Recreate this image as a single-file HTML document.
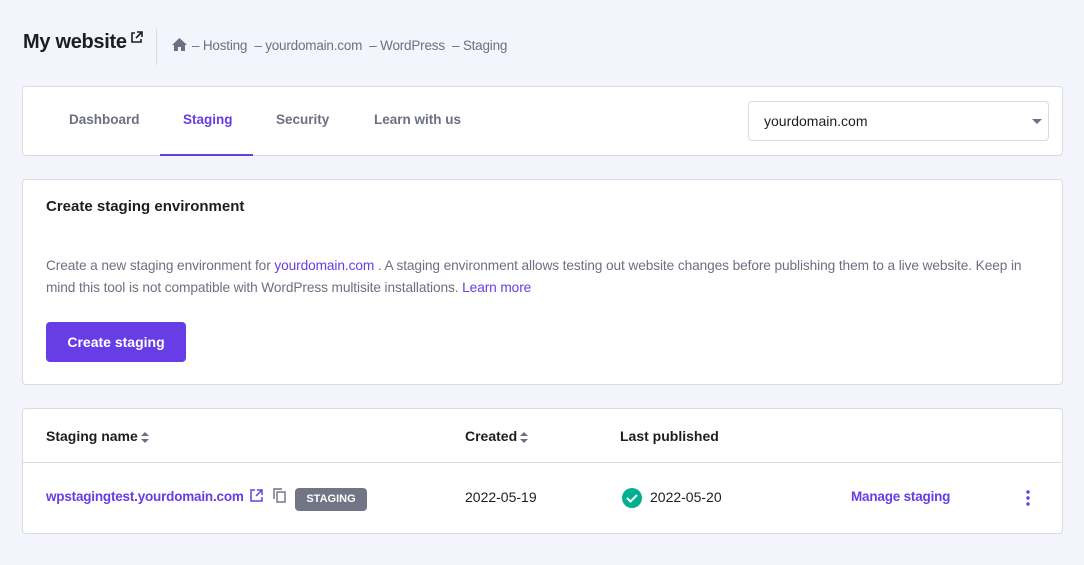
<!DOCTYPE html>
<html><head><style>
*{box-sizing:border-box;margin:0;padding:0}
body{width:1084px;height:565px;background:#f4f4fc;font-family:"Liberation Sans",sans-serif;color:#1d1e20;position:relative;overflow:hidden}
.abs{position:absolute}
.card{position:absolute;background:#fff;border:1px solid #dadce0;border-radius:4px}
.tab{position:absolute;top:25px;font-size:14px;font-weight:bold;color:#6d7081}
.muted{color:#6d7081}
.link{color:#673de6}
.sort{display:inline-block;vertical-align:middle;margin-left:3px}
</style></head><body>
<div class="abs" style="left:23px;top:31px;font-size:20px;font-weight:bold;letter-spacing:-0.3px">My website</div>
<svg class="abs" style="left:130px;top:31px" width="13" height="13" viewBox="0 0 13 13"><path d="M5 2H2v9h9V8M7 1h5v5M12 1L6 7" stroke="#1d1e20" stroke-width="1.6" fill="none"/></svg>
<div class="abs" style="left:156px;top:28px;width:1px;height:37px;background:#dadce0"></div>
<svg class="abs" style="left:172px;top:38px" width="15" height="13" viewBox="0 0 15 13"><path d="M7.5 0L0 7h2v6h4V9h3v4h4V7h2z" fill="#6d7081"/></svg>
<div class="abs muted" style="left:192px;top:38px;font-size:13.5px;letter-spacing:-0.2px">– Hosting &nbsp;– yourdomain.com &nbsp;– WordPress &nbsp;– Staging</div>

<div class="card" style="left:22px;top:86px;width:1041px;height:70px">
<div class="tab" style="left:46px;font-size:13.5px">Dashboard</div>
<div class="tab" style="left:160px;color:#673de6;font-size:13.5px">Staging</div>
<div class="abs" style="left:137px;top:67px;width:93px;height:2px;background:#673de6"></div>
<div class="tab" style="left:253px;font-size:13.5px">Security</div>
<div class="tab" style="left:351px;font-size:13.5px">Learn with us</div>
<div class="abs" style="left:725px;top:14px;width:301px;height:40px;border:1px solid #dadce0;border-radius:4px;font-size:14px;padding:11px 15px">yourdomain.com</div>
<div class="abs" style="left:1009px;top:32px;border:5px solid transparent;border-top-color:#6d7081;border-bottom:0"></div>
</div>

<div class="card" style="left:22px;top:179px;width:1041px;height:206px">
<div class="abs" style="left:23px;top:18px;font-size:15px;font-weight:bold">Create staging environment</div>
<div class="abs muted" style="left:23px;top:75px;width:1000px;font-size:13.7px;line-height:22px;letter-spacing:-0.1px">Create a new staging environment for <span class="link">yourdomain.com</span> . A staging environment allows testing out website changes before publishing them to a live website. Keep in mind this tool is not compatible with WordPress multisite installations. <span class="link">Learn more</span></div>
<div class="abs" style="left:23px;top:142px;width:140px;height:40px;background:#673de6;border-radius:4px;color:#fff;font-size:14px;font-weight:bold;text-align:center;line-height:40px">Create staging</div>
</div>

<div class="card" style="left:22px;top:408px;width:1041px;height:126px">
<div class="abs" style="left:23px;top:19px;font-size:14px;font-weight:bold">Staging name<svg class="sort" width="8" height="11"><path d="M4 0L8 4H0zM4 11L0 7h8z" fill="#6d7081"/></svg></div>
<div class="abs" style="left:442px;top:19px;font-size:14px;font-weight:bold">Created<svg class="sort" width="8" height="11"><path d="M4 0L8 4H0zM4 11L0 7h8z" fill="#6d7081"/></svg></div>
<div class="abs" style="left:597px;top:19px;font-size:14px;font-weight:bold">Last published</div>
<div class="abs" style="left:0;top:53px;width:1039px;height:1px;background:#dadce0"></div>
<div class="abs link" style="left:23px;top:80px;font-size:13.5px;font-weight:bold;letter-spacing:-0.2px">wpstagingtest.yourdomain.com</div>
<svg class="abs" style="left:227px;top:80px" width="13" height="13" viewBox="0 0 13 13"><path d="M5 1H1v11h11V8M7 1h5v5M12 1L6 7" stroke="#673de6" stroke-width="1.5" fill="none"/></svg>
<svg class="abs" style="left:250px;top:79px" width="13" height="15" viewBox="0 0 13 15"><rect x="4" y="4" width="8" height="10" stroke="#6d7081" stroke-width="1.4" fill="none"/><path d="M1 11V1h8" stroke="#6d7081" stroke-width="1.4" fill="none"/></svg>
<div class="abs" style="left:272px;top:79px;width:72px;height:23px;background:#727586;border-radius:4px;color:#fff;font-size:11px;font-weight:bold;text-align:center;line-height:23px">STAGING</div>
<div class="abs" style="left:442px;top:80px;font-size:14px">2022-05-19</div>
<div class="abs" style="left:599px;top:79px;width:20px;height:20px;border-radius:50%;background:#00b090"></div>
<svg class="abs" style="left:599px;top:79px" width="20" height="20"><path d="M5 10l3.5 3.5L15 7" stroke="#fff" stroke-width="2" fill="none"/></svg>
<div class="abs" style="left:627px;top:80px;font-size:14px">2022-05-20</div>
<div class="abs link" style="left:828px;top:80px;font-size:13.5px;font-weight:bold;letter-spacing:-0.2px">Manage staging</div>
<svg class="abs" style="left:1002px;top:80px" width="6" height="18"><circle cx="3" cy="3" r="1.7" fill="#673de6"/><circle cx="3" cy="9" r="1.7" fill="#673de6"/><circle cx="3" cy="15" r="1.7" fill="#673de6"/></svg>
</div>
</body></html>
